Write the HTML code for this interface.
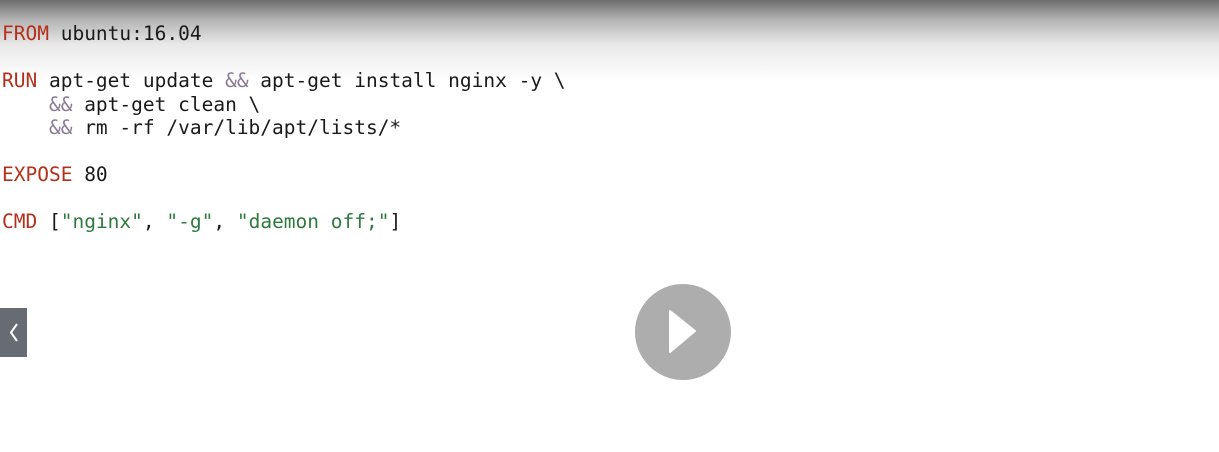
<!DOCTYPE html>
<html><head><style>
html,body{margin:0;padding:0;width:1219px;height:452px;overflow:hidden;background:#fff;}
.grad{position:absolute;left:0;top:0;width:1219px;height:80px;background:linear-gradient(#6e6e6e 0%,#b4b4b4 25%,#e8e8e8 55%,#fff 100%);}
pre{position:absolute;left:2px;top:22px;margin:0;font-family:"DejaVu Sans Mono","Liberation Mono",monospace;font-size:19.5px;line-height:23.5px;color:#1a1a1a;}
.k{color:#b5301a}.o{color:#8a7a95}.s{color:#2e7a3e}
.btn{position:absolute;left:0;top:308px;width:27px;height:49px;background:#676b73;}
.play{position:absolute;left:635px;top:284px;width:96px;height:96px;border-radius:50%;background:#adadad;}
</style></head><body>
<div class="grad"></div>
<pre><span class="k">FROM</span> ubuntu:16.04

<span class="k">RUN</span> apt-get update <span class="o">&amp;&amp;</span> apt-get install nginx -y \
    <span class="o">&amp;&amp;</span> apt-get clean \
    <span class="o">&amp;&amp;</span> rm -rf /var/lib/apt/lists/*

<span class="k">EXPOSE</span> 80

<span class="k">CMD</span> [<span class="s">"nginx"</span>, <span class="s">"-g"</span>, <span class="s">"daemon off;"</span>]</pre>
<div class="btn"><svg width="27" height="49"><path d="M17 16 L11 24.5 L17 33" fill="none" stroke="#fff" stroke-width="2"/></svg></div>
<div class="play"><svg width="96" height="96"><path d="M35 27 L35 68 L60 47 Z" fill="#fff" stroke="#fff" stroke-width="2" stroke-linejoin="round"/></svg></div>
</body></html>
